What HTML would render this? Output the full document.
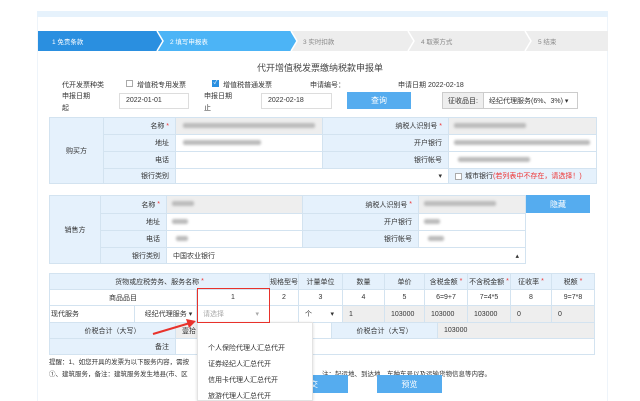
<!DOCTYPE html>
<html><head><meta charset="utf-8"><style>
*{box-sizing:border-box;margin:0;padding:0}
body{width:640px;height:401px;background:#fff;position:relative;overflow:hidden;font-family:"Liberation Sans","Noto Sans CJK SC",sans-serif;font-size:7px;color:#333}
.a{position:absolute}
.c{position:absolute;border:1px solid #d3e3f0;display:flex;align-items:center;white-space:nowrap;overflow:hidden}
.lb{background:#e5f1fc;justify-content:flex-end;padding-right:6px}
.lc{background:#e5f1fc;justify-content:center}
.w{background:#fff;padding-left:6px}
.g{background:#eee;padding-left:6px}
.ct{justify-content:center;padding:0}
.bl{position:absolute;height:5px;background:#bbb;filter:blur(1.3px);border-radius:2px}
.r{color:#e33}
.btn{position:absolute;background:#55acef;color:#fff;display:flex;align-items:center;justify-content:center;font-size:8px}
.step{position:absolute;top:31px;height:20px;display:flex;align-items:center;font-size:6.5px}
</style></head><body>
<div class="a" style="left:37px;top:11px;width:571px;height:6px;background:#e6f2fc"></div>
<div class="a" style="left:37px;top:17px;width:1px;height:384px;background:#eef4fa"></div>
<div class="a" style="left:607px;top:17px;width:1px;height:384px;background:#eef4fa"></div>
<svg class="a" style="left:38px;top:31px" width="570" height="20">
<rect x="0" y="0" width="570" height="20" fill="#ededed"/>
<polygon points="0,0 119,0 125,10 119,20 0,20" fill="#2a8fe0"/>
<polygon points="119,0 253,0 259,10 253,20 119,20 125,10" fill="#4cb4f6"/>
<polyline points="119,0 125,10 119,20" stroke="#fff" stroke-width="1.5" fill="none"/>
<polyline points="253,0 259,10 253,20" stroke="#fff" stroke-width="1.5" fill="none"/>
<polyline points="370,0 376,10 370,20" stroke="#fff" stroke-width="1.5" fill="none"/>
<polyline points="487,0 493,10 487,20" stroke="#fff" stroke-width="1.5" fill="none"/>
</svg>
<div class="step" style="left:52px;color:#fff">1 免责条款</div>
<div class="step" style="left:170px;color:#fff">2 填写申报表</div>
<div class="step" style="left:303px;color:#888">3 实时扣款</div>
<div class="step" style="left:421px;color:#888">4 取票方式</div>
<div class="step" style="left:538px;color:#888">5 结束</div>

<div class="a" style="left:0;width:640px;top:61px;text-align:center;font-size:9px;color:#444">代开增值税发票缴纳税款申报单</div>

<div class="a" style="left:62px;top:80px">代开发票种类</div>
<div class="a" style="left:126px;top:80px;width:7px;height:7px;border:1px solid #aaa;background:#fff"></div>
<div class="a" style="left:137px;top:80px">增值税专用发票</div>
<div class="a" style="left:212px;top:80px;width:7px;height:7px;background:#2a8fe0;color:#fff;font-size:6px;line-height:7px;text-align:center">✓</div>
<div class="a" style="left:223px;top:80px">增值税普通发票</div>
<div class="a" style="left:310px;top:80px">申请编号：</div>
<div class="a" style="left:398px;top:80px">申请日期 2022-02-18</div>

<div class="a" style="left:62px;top:91px;line-height:12px">申报日期<br>起</div>
<div class="a" style="left:119px;top:93px;width:70px;height:16px;border:1px solid #ddd;padding-left:6px;line-height:14px">2022-01-01</div>
<div class="a" style="left:204px;top:91px;line-height:12px">申报日期<br>止</div>
<div class="a" style="left:261px;top:93px;width:71px;height:16px;border:1px solid #ddd;padding-left:6px;line-height:14px">2022-02-18</div>
<div class="btn" style="left:347px;top:92px;width:64px;height:17px">查询</div>
<div class="a" style="left:442px;top:92px;width:136px;height:17px;border:1px solid #ccc;display:flex">
<div style="width:41px;background:#eee;border-right:1px solid #ccc;display:flex;align-items:center;justify-content:center">征收品目:</div>
<div style="padding-left:5px;display:flex;align-items:center">经纪代理服务(6%、3%) ▾</div></div>

<!-- buyer -->
<div class="c lc" style="left:49px;top:117px;width:55px;height:67px">购买方</div>
<div class="c lb" style="left:103px;top:117px;width:73px;height:18px">名称 <span class="r">&nbsp;*</span></div>
<div class="c g" style="left:175px;top:117px;width:148px;height:18px"></div>
<div class="c lb" style="left:322px;top:117px;width:127px;height:18px">纳税人识别号 <span class="r">&nbsp;*</span></div>
<div class="c g" style="left:448px;top:117px;width:149px;height:18px"></div>
<div class="c lb" style="left:103px;top:134px;width:73px;height:18px">地址</div>
<div class="c w" style="left:175px;top:134px;width:148px;height:18px"></div>
<div class="c lb" style="left:322px;top:134px;width:127px;height:18px">开户银行</div>
<div class="c w" style="left:448px;top:134px;width:149px;height:18px"></div>
<div class="c lb" style="left:103px;top:151px;width:73px;height:18px">电话</div>
<div class="c w" style="left:175px;top:151px;width:148px;height:18px"></div>
<div class="c lb" style="left:322px;top:151px;width:127px;height:18px">银行帐号</div>
<div class="c w" style="left:448px;top:151px;width:149px;height:18px"></div>
<div class="c lb" style="left:103px;top:168px;width:73px;height:16px">银行类别</div>
<div class="c w" style="left:175px;top:168px;width:274px;height:16px;justify-content:flex-end;padding-right:6px">▾</div>
<div class="c lc" style="left:448px;top:168px;width:149px;height:16px;justify-content:flex-start;padding-left:6px"><span style="display:inline-block;width:7px;height:7px;border:1px solid #aaa;background:#fff;margin-right:3px"></span>城市银行<span class="r">(若列表中不存在，请选择！)</span></div>
<div class="bl" style="left:183px;top:123px;width:132px"></div>
<div class="bl" style="left:454px;top:123px;width:72px"></div>
<div class="bl" style="left:183px;top:140px;width:78px"></div>
<div class="bl" style="left:454px;top:140px;width:136px"></div>
<div class="bl" style="left:458px;top:157px;width:72px"></div>

<!-- seller -->
<div class="c lc" style="left:49px;top:195px;width:52px;height:69px">销售方</div>
<div class="c lb" style="left:100px;top:195px;width:67px;height:19px">名称 <span class="r">&nbsp;*</span></div>
<div class="c g" style="left:166px;top:195px;width:137px;height:19px"></div>
<div class="c lb" style="left:302px;top:195px;width:117px;height:19px">纳税人识别号 <span class="r">&nbsp;*</span></div>
<div class="c g" style="left:418px;top:195px;width:108px;height:19px"></div>
<div class="btn" style="left:526px;top:195px;width:64px;height:18px">隐藏</div>
<div class="c lb" style="left:100px;top:213px;width:67px;height:18px">地址</div>
<div class="c w" style="left:166px;top:213px;width:137px;height:18px"></div>
<div class="c lb" style="left:302px;top:213px;width:117px;height:18px">开户银行</div>
<div class="c w" style="left:418px;top:213px;width:108px;height:18px"></div>
<div class="c lb" style="left:100px;top:230px;width:67px;height:18px">电话</div>
<div class="c w" style="left:166px;top:230px;width:137px;height:18px"></div>
<div class="c lb" style="left:302px;top:230px;width:117px;height:18px">银行帐号</div>
<div class="c w" style="left:418px;top:230px;width:108px;height:18px"></div>
<div class="c lb" style="left:100px;top:247px;width:67px;height:17px">银行类别</div>
<div class="c w" style="left:166px;top:247px;width:360px;height:17px;justify-content:space-between;padding-right:6px"><span>中国农业银行</span><span>▴</span></div>
<div class="bl" style="left:172px;top:201px;width:22px"></div>
<div class="bl" style="left:424px;top:201px;width:72px"></div>
<div class="bl" style="left:172px;top:219px;width:16px"></div>
<div class="bl" style="left:424px;top:219px;width:16px"></div>
<div class="bl" style="left:176px;top:236px;width:12px"></div>
<div class="bl" style="left:428px;top:236px;width:16px"></div>

<!-- items -->
<div class="c lc" style="left:49px;top:273px;width:221px;height:17px">货物或应税劳务、服务名称 <span class="r">&nbsp;*</span></div>
<div class="c lc" style="left:269px;top:273px;width:30px;height:17px">规格型号</div>
<div class="c lc" style="left:298px;top:273px;width:45px;height:17px">计量单位</div>
<div class="c lc" style="left:342px;top:273px;width:43px;height:17px">数量</div>
<div class="c lc" style="left:384px;top:273px;width:41px;height:17px">单价</div>
<div class="c lc" style="left:424px;top:273px;width:44px;height:17px">含税金额<span class="r">&nbsp;*</span></div>
<div class="c lc" style="left:467px;top:273px;width:44px;height:17px">不含税金额<span class="r">&nbsp;*</span></div>
<div class="c lc" style="left:510px;top:273px;width:42px;height:17px">征收率<span class="r">&nbsp;*</span></div>
<div class="c lc" style="left:551px;top:273px;width:44px;height:17px">税额<span class="r">&nbsp;*</span></div>

<div class="c w ct" style="left:49px;top:289px;width:148px;height:17px">商品品目</div>
<div class="c w ct" style="left:196px;top:289px;width:74px;height:17px">1</div>
<div class="c w ct" style="left:269px;top:289px;width:30px;height:17px">2</div>
<div class="c w ct" style="left:298px;top:289px;width:45px;height:17px">3</div>
<div class="c w ct" style="left:342px;top:289px;width:43px;height:17px">4</div>
<div class="c w ct" style="left:384px;top:289px;width:41px;height:17px">5</div>
<div class="c w ct" style="left:424px;top:289px;width:44px;height:17px">6=9+7</div>
<div class="c w ct" style="left:467px;top:289px;width:44px;height:17px">7=4*5</div>
<div class="c w ct" style="left:510px;top:289px;width:42px;height:17px">8</div>
<div class="c w ct" style="left:551px;top:289px;width:44px;height:17px">9=7*8</div>

<div class="c w" style="left:49px;top:305px;width:86px;height:18px;padding-left:1px">现代服务</div>
<div class="c w" style="left:134px;top:305px;width:63px;height:18px;justify-content:center">经纪代理服务 ▾</div>
<div class="c w" style="left:196px;top:305px;width:74px;height:18px;justify-content:space-between;padding-right:10px;color:#aaa"><span>请选择</span><span>▾</span></div>
<div class="c w" style="left:269px;top:305px;width:30px;height:18px"></div>
<div class="c w" style="left:298px;top:305px;width:45px;height:18px;justify-content:space-between;padding-right:8px"><span>个</span><span>▾</span></div>
<div class="c g" style="left:342px;top:305px;width:43px;height:18px">1</div>
<div class="c g" style="left:384px;top:305px;width:41px;height:18px">103000</div>
<div class="c g" style="left:424px;top:305px;width:44px;height:18px">103000</div>
<div class="c g" style="left:467px;top:305px;width:44px;height:18px">103000</div>
<div class="c g" style="left:510px;top:305px;width:42px;height:18px">0</div>
<div class="c g" style="left:551px;top:305px;width:44px;height:18px">0</div>

<div class="c lc" style="left:49px;top:322px;width:127px;height:17px">价税合计（大写）</div>
<div class="c g" style="left:175px;top:322px;width:138px;height:17px">壹拾</div>
<div class="c lc" style="left:331px;top:322px;width:107px;height:17px">价税合计（大写）</div>
<div class="c g" style="left:437px;top:322px;width:158px;height:17px">103000</div>
<div class="c lb" style="left:49px;top:338px;width:127px;height:17px">备注</div>
<div class="c w" style="left:175px;top:338px;width:420px;height:17px"></div>

<div class="a" style="left:49px;top:356px;font-size:6.5px">提醒：1、如您开具的发票为以下服务内容，需按</div>
<div class="a" style="left:316px;top:356px;font-size:6.5px"></div>
<div class="a" style="left:49px;top:368px;font-size:6.5px">①、建筑服务，备注：建筑服务发生地县(市、区</div>
<div class="a" style="left:322px;top:368px;font-size:6.5px">注：起运地、到达地、车种车号以及运输货物信息等内容。</div>
<div class="btn" style="left:272px;top:375px;width:76px;height:18px">提交</div>
<div class="btn" style="left:377px;top:375px;width:65px;height:18px">预览</div>

<!-- dropdown -->
<div class="a" style="left:197px;top:322px;width:116px;height:79px;background:#fff;border:1px solid #e3e3e3;box-shadow:0 1px 3px rgba(0,0,0,.15)"></div>
<div class="a" style="left:208px;top:343px;font-size:7px">个人保险代理人汇总代开</div>
<div class="a" style="left:208px;top:359px;font-size:7px">证券经纪人汇总代开</div>
<div class="a" style="left:208px;top:375px;font-size:7px">信用卡代理人汇总代开</div>
<div class="a" style="left:208px;top:391px;font-size:7px">旅游代理人汇总代开</div>

<div class="a" style="left:197px;top:288px;width:73px;height:35px;border:1.5px solid #e8322b"></div>
<svg class="a" style="left:150px;top:318px" width="50" height="20"><line x1="3" y1="16" x2="40" y2="5" stroke="#e8322b" stroke-width="2"/><polygon points="46,3 36,1 39,10" fill="#e8322b"/></svg>
</body></html>
